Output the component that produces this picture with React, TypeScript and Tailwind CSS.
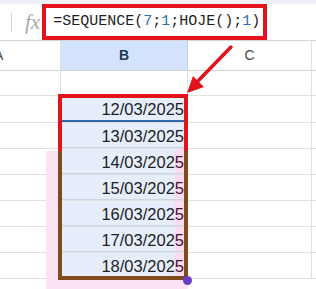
import React from "react";

const dates = [
  "12/03/2025",
  "13/03/2025",
  "14/03/2025",
  "15/03/2025",
  "16/03/2025",
  "17/03/2025",
  "18/03/2025",
];

// row heights (incl. bottom grid line) for the data rows
const rowHeights = ["h-[27px]", "h-[26px]", "h-[26px]", "h-[26px]", "h-[26px]", "h-[26px]", "h-[26px]"];

export default function App() {
  return (
    <div className="relative w-[316px] h-[289px] overflow-hidden bg-white font-['Liberation_Sans',Arial,sans-serif]">
      {/* top strip */}
      <div className="h-[4px] bg-[#eef1f5]" />

      {/* formula bar */}
      <div className="flex h-[36px] items-center">
        <div className="ml-[11px] h-[20px] w-px bg-[#d6d6d6]" />
        <span className="ml-[13px] font-['Liberation_Serif',serif] text-[21px] italic leading-none text-[#a9a9a9]">
          fx
        </span>
        <div className="ml-[2px] flex h-[36px] w-[225px] items-center border-4 border-[#e3121c] pl-[7px] font-['Liberation_Mono',monospace] text-[15px] text-[#1f1f1f]">
          <span>=SEQUENCE(</span>
          <span className="text-[#2c6db4]">7</span>
          <span>;</span>
          <span className="text-[#2c6db4]">1</span>
          <span>;HOJE();</span>
          <span className="text-[#2c6db4]">1</span>
          <span>)</span>
        </div>
      </div>

      {/* column headers */}
      <div className="flex h-[31px] border-y border-[#d3d3d3] text-[14px]">
        <div className="flex w-[61px] items-center overflow-hidden border-r border-[#e0e0e0]">
          <span className="ml-[-6px] text-[#444746]">A</span>
        </div>
        <div className="flex w-[127px] items-center justify-center border-r border-[#c6d3ea] bg-[#d3e3fd] font-semibold text-[#213356]">
          B
        </div>
        <div className="flex w-[124px] items-center justify-center border-r border-[#e0e0e0] text-[#444746]">
          C
        </div>
        <div className="flex-1" />
      </div>

      {/* empty row */}
      <div className="flex h-[25px] border-b border-[#e1e1e1]">
        <div className="w-[61px] border-r border-[#e1e1e1]" />
        <div className="w-[127px] border-r border-[#e1e1e1]" />
        <div className="w-[124px] border-r border-[#e1e1e1]" />
      </div>

      {/* data rows */}
      {dates.map((d, i) => {
        const pink = i >= 2;
        return (
          <div key={d} className={`flex ${rowHeights[i]} border-b border-[#e1e1e1]`}>
            <div className="w-[61px] border-r border-[#e1e1e1]" />
            <div
              className={`flex w-[127px] items-end justify-end pb-[3px] pr-[4px] text-[16.5px] leading-none text-[#202124] ${
                pink
                  ? "bg-[linear-gradient(to_right,#e6eefc_114px,#fbdcf1_114px)]"
                  : "bg-[#e6eefc]"
              } ${i === 0 ? "border-b-2 border-[#2d6ca8]" : "border-b border-[#cdd5e2]"}`}
            >
              {pink ? (
                <>
                  {d.slice(0, -1)}
                  <span className="text-[#4a1232]">{d.slice(-1)}</span>
                </>
              ) : (
                d
              )}
            </div>
            <div className="w-[124px] border-r border-[#e1e1e1]" />
          </div>
        );
      })}

      {/* pink highlight bands */}
      <div className="absolute left-[46px] top-[151px] h-[138px] w-[12px] bg-[#fde3f4]" />
      <div className="absolute left-[46px] top-[280px] h-[9px] w-[142px] bg-[#fde3f4]" />

      {/* selection outline: brown lower part, red upper part */}
      <div className="absolute left-[58px] top-[151px] h-[129px] w-[130px] border-x-4 border-b-4 border-[#7f4a1c]" />
      <div className="absolute left-[58px] top-[94px] h-[57px] w-[130px] border-x-4 border-t-4 border-[#e3121c]" />

      {/* fill handle */}
      <div className="absolute left-[183px] top-[276px] h-[9px] w-[9px] rounded-full bg-[#6a3fc6]" />

      {/* arrow */}
      <svg className="absolute left-0 top-0" width="316" height="289" viewBox="0 0 316 289">
        <line x1="231" y1="47" x2="197" y2="82" stroke="#e3121c" strokeWidth="3.5" strokeLinecap="round" />
        <polygon points="187,93 193,76 204,87" fill="#e3121c" />
      </svg>
    </div>
  );
}
